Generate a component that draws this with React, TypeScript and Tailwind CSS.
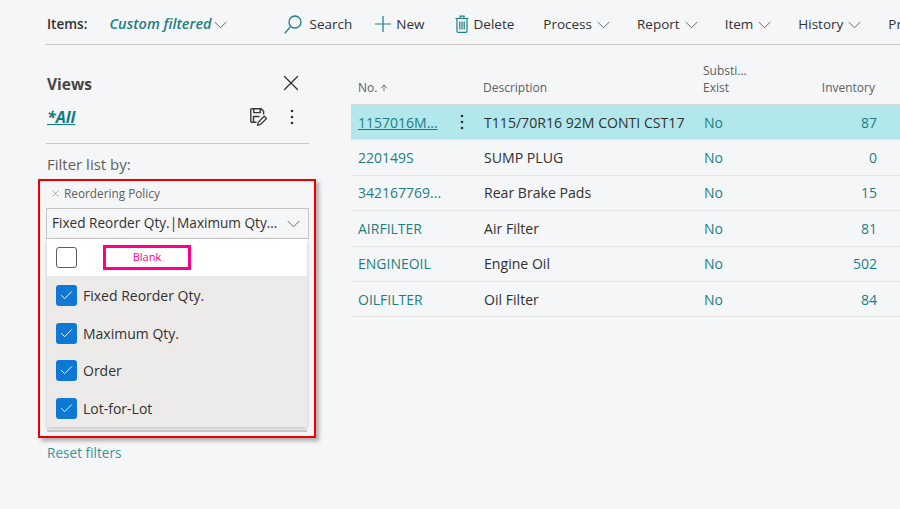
import { X, Check, ArrowUp } from 'lucide-react';

const FONT = "font-['Open_Sans','Noto_Sans',sans-serif]";

const rows = [
  { no: '1157016M...', desc: 'T115/70R16 92M CONTI CST17', inv: '87', active: true },
  { no: '220149S', desc: 'SUMP PLUG', inv: '0' },
  { no: '342167769...', desc: 'Rear Brake Pads', inv: '15' },
  { no: 'AIRFILTER', desc: 'Air Filter', inv: '81' },
  { no: 'ENGINEOIL', desc: 'Engine Oil', inv: '502' },
  { no: 'OILFILTER', desc: 'Oil Filter', inv: '84' },
];

const options = [
  { label: 'Fixed Reorder Qty.', h: 'h-[39px]' },
  { label: 'Maximum Qty.', h: 'h-[37px]' },
  { label: 'Order', h: 'h-[38px]' },
  { label: 'Lot-for-Lot', h: 'h-[37px]' },
];

const Chevron = () => (
  <svg width="13" height="8" viewBox="0 0 14 8" fill="none" stroke="#605e5c" strokeWidth="1" className="mt-[2px] shrink-0">
    <path d="M0.8 0.8L7 7l6.2-6.2" />
  </svg>
);

const SearchIcon = () => (
  <svg width="18" height="19" viewBox="0 0 18 19" fill="none" stroke="#1d7f83" strokeWidth="1.3">
    <circle cx="11" cy="7" r="6" />
    <path d="M6.8 11.4L0.8 18.2" />
  </svg>
);

const PlusIcon = () => (
  <svg width="16" height="16" viewBox="0 0 16 16" stroke="#1d7f83" strokeWidth="1.2">
    <path d="M8 0v16M0 8h16" />
  </svg>
);

const TrashIcon = () => (
  <svg width="14" height="18" viewBox="0 0 14 18" fill="none" stroke="#1d7f83" strokeWidth="1.2">
    <path d="M0.5 3.5h13M5 3.5V1.2h4v2.3M2 3.5v12.7c0 .7.5 1.2 1.2 1.2h7.6c.7 0 1.2-.5 1.2-1.2V3.5" />
    <path d="M4.8 6.5v8M7 6.5v8M9.2 6.5v8" />
  </svg>
);

const SaveEditIcon = () => (
  <svg width="17" height="18" viewBox="0 0 17 18" fill="none" stroke="#3b3a39" strokeWidth="1.4">
    <path d="M6.5 14.3H1.8a1 1 0 0 1-1-1V1.8a1 1 0 0 1 1-1h9.4l2.4 2.4V6.5" />
    <path d="M3.8 1v3.6h6.4V1" />
    <path d="M3.5 14V8.5h6" />
    <path d="M7.6 17.2l.6-3 6-6 2.3 2.3-6 6z" strokeWidth="1.3" />
  </svg>
);

const Dots = () => (
  <svg width="4" height="16" viewBox="0 0 4 16" fill="#323130">
    <circle cx="2" cy="2" r="1.3" />
    <circle cx="2" cy="8" r="1.3" />
    <circle cx="2" cy="14" r="1.3" />
  </svg>
);

const Menu = ({ label }: { label: string }) => (
  <span className="flex items-center gap-[5px]">
    {label}
    <Chevron />
  </span>
);

const Checkbox = ({ checked }: { checked?: boolean }) => (
  <span
    className={
      checked
        ? 'flex h-[21px] w-[21px] shrink-0 items-center justify-center rounded-[3px] bg-[#0f78d4]'
        : 'h-[21px] w-[21px] shrink-0 rounded-[3px] border border-[#605e5c] bg-white'
    }
  >
    {checked && <Check size={15} strokeWidth={1.5} className="text-white" />}
  </span>
);

export default function App() {
  return (
    <div className={`${FONT} flex h-[509px] w-[900px] flex-col overflow-hidden bg-[#f5f6f8] pt-[2px] text-[14px] text-[#323130]`}>
      <header className="ml-[46px] flex h-[43px] shrink-0 items-center whitespace-nowrap border-b border-[#c8c8c8] pl-[1px] pt-[2px] text-[13.5px]">
        <span className="font-semibold">Items:</span>
        <span className="ml-[22px] flex items-center gap-[2px] text-[14.5px] font-semibold italic text-[#1d7f83]">
          Custom filtered
          <Chevron />
        </span>
        <span className="mb-[2px] ml-[24px] h-[24px] w-px bg-[#c8c8c8]" />
        <span className="ml-[33px] flex items-center gap-[8px]">
          <SearchIcon />
          Search
        </span>
        <span className="ml-[23px] flex items-center gap-[5px]">
          <PlusIcon />
          New
        </span>
        <span className="ml-[30px] flex items-center gap-[5px]">
          <TrashIcon />
          Delete
        </span>
        <span className="ml-[29px] flex gap-[27px]">
          <Menu label="Process" />
          <Menu label="Report" />
          <Menu label="Item" />
          <Menu label="History" />
          <span>Pr</span>
        </span>
      </header>

      <div className="flex flex-1">
        <aside className="ml-[47px] w-[262px] shrink-0">
          <div className="mt-[25px] flex h-[26px] items-center justify-between">
            <span className="pt-[4px] text-[15.5px] font-bold text-[#484644]">Views</span>
            <X size={26} strokeWidth={1.1} className="mr-[5px] text-[#323130]" />
          </div>
          <div className="mt-[9px] flex h-[24px] items-center">
            <span className="text-[16px] font-bold italic text-[#0f7b80] underline">*All</span>
            <span className="ml-auto mr-[23px]"><SaveEditIcon /></span>
            <span className="mr-[15px]"><Dots /></span>
          </div>
          <div className="-ml-px mt-[14px] border-t border-[#c8c8c8] pl-px pt-[9px] text-[15px] text-[#605e5c]">Filter list by:</div>

          {/* red annotation frame around the filter dropdown */}
          <div className="-ml-[9px] mt-[3px] h-[259px] w-[278px] border-[2px] border-[#ee0000] shadow-[3px_3px_4px_rgba(0,0,0,0.3)]">
            <div className="ml-[7px] w-[260px]">
              <div className="flex h-[27px] items-center text-[11.8px] text-[#605e5c]">
                <X size={11} strokeWidth={1} className="ml-[3px] mr-[3px] mb-[2px]" />
                Reordering Policy
              </div>
              <div className="-ml-px flex h-[31px] w-[263px] items-center justify-between border border-[#c8c6c4] pl-[5px] pr-[8px]">
                <span className="whitespace-nowrap pt-px text-[13.6px]">Fixed Reorder Qty.|Maximum Qty...</span>
                <Chevron />
              </div>
              <div className="shadow-[0_2px_4px_rgba(0,0,0,0.2)]">
                <div className="flex h-[37px] items-center bg-white pl-[9px]">
                  <Checkbox />
                  <span className="ml-[26px] flex h-[25px] w-[88px] items-center justify-center border-[3px] border-[#ff0084] text-[11px] text-[#ff0084]">
                    Blank
                  </span>
                </div>
                {options.map((o) => (
                  <div key={o.label} className={`${o.h} flex items-center gap-[6px] bg-[#edebe9] pl-[9px]`}>
                    <Checkbox checked />
                    {o.label}
                  </div>
                ))}
              </div>
              <div className="mt-[3px] border-t-2 border-[#c8c6c4]" />
            </div>
          </div>
          <div className="mt-[5px] text-[13.6px] text-[#3d9298]">Reset filters</div>
        </aside>

        <main className="ml-[42px] flex-1">
          <div className="flex h-[60px] items-end border-b border-[#d8d8d8] pb-[8px] text-[12px] leading-[17px] text-[#605e5c]">
            <span className="ml-[7px] flex w-[125px] items-center gap-[2px]">
              No.
              <ArrowUp size={10} strokeWidth={2} />
            </span>
            <span className="w-[220px]">Description</span>
            <span className="w-[90px]">
              Substi...
              <br />
              Exist
            </span>
            <span className="w-[82px] text-right">Inventory</span>
          </div>
          {rows.map((r) => (
            <div
              key={r.no}
              className={`flex h-[35.4px] items-center border-b border-[#e4e4e4] ${r.active ? 'bg-[#b2e8eb]' : ''}`}
            >
              <span className={`ml-[7px] w-[93px] text-[#1d7f83] ${r.active ? 'underline' : ''}`}>{r.no}</span>
              <span className="flex w-[33px] pl-[9px]">{r.active && <Dots />}</span>
              <span className="w-[220px] whitespace-nowrap text-[14.1px]">{r.desc}</span>
              <span className="w-[90px] text-[#1d7f83]">No</span>
              <span className="w-[83px] text-right text-[#1d7f83]">{r.inv}</span>
            </div>
          ))}
        </main>
      </div>
    </div>
  );
}
